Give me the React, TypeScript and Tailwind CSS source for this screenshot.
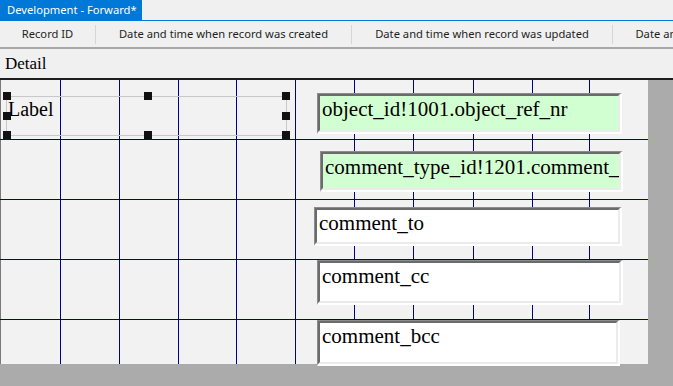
import React from "react";

// Access-style form design view: "Development - Forward*"

const headerCols = [
  { label: "Record ID", w: "w-[96px]" },
  { label: "Date and time when record was created", w: "w-[256px]" },
  { label: "Date and time when record was updated", w: "w-[261px]" },
  { label: "Date and time when record was deleted", w: "w-[254px]" },
];

const vLines = [60, 119, 178, 236, 295, 354, 413, 473, 532, 589];
const hLines = [59, 119, 179, 239];

const fields = [
  { text: "object_id!1001.object_ref_nr", box: "left-[316px] top-[13px] w-[305px] h-[41px]", bg: "bg-[#d2ffd2]" },
  { text: "comment_type_id!1201.comment_type", box: "left-[319px] top-[71px] w-[303px] h-[41px]", bg: "bg-[#d2ffd2]" },
  { text: "comment_to", box: "left-[313px] top-[127px] w-[308px] h-[39px]", bg: "bg-white" },
  { text: "comment_cc", box: "left-[316px] top-[180px] w-[306px] h-[45px]", bg: "bg-white" },
  { text: "comment_bcc", box: "left-[316px] top-[240px] w-[303px] h-[46px]", bg: "bg-white" },
];

const handles = [
  "left-[2px] top-[12px]",
  "left-[143px] top-[12px]",
  "left-[281px] top-[12px]",
  "left-[2px] top-[32px]",
  "left-[281px] top-[32px]",
  "left-[2px] top-[51px]",
  "left-[143px] top-[51px]",
  "left-[281px] top-[51px]",
];

function TextBox({ text, box, bg }: (typeof fields)[0]) {
  return (
    <div
      className={`absolute ${box} border-t border-l border-t-[#8c8c8c] border-l-[#8c8c8c] border-r-2 border-b-2 border-r-white border-b-white`}
    >
      <div
        className={`h-full w-full overflow-hidden whitespace-nowrap border-t-2 border-l-2 border-t-[#6b6b6b] border-l-[#6b6b6b] border-r-2 border-b-2 border-r-[#ebebeb] border-b-[#ebebeb] ${bg} pl-[2px] pt-[1px] text-[21px] leading-[24px] text-black`}
        style={{ fontFamily: '"Liberation Serif", "Times New Roman", serif' }}
      >
        {text}
      </div>
    </div>
  );
}

export default function App() {
  return (
    <div
      className="relative h-[386px] w-[673px] overflow-hidden bg-[#ababab]"
      style={{ fontFamily: '"Noto Sans", "Open Sans", sans-serif' }}
    >
      {/* Tab strip */}
      <div className="flex h-[21px] border-b border-[#0078d7] bg-[#f0f0f0]">
        <div className="flex h-[20px] w-[142px] items-center whitespace-nowrap pl-[7px] text-[11.2px] text-white bg-[#0078d7]">
          Development - Forward*
        </div>
      </div>

      {/* Datasheet-like header */}
      <div className="flex h-[28px] items-center overflow-hidden whitespace-nowrap border-b-2 border-[#a8a8a8] bg-[#f0f0f0] text-[11.2px] text-[#1e1e1e]">
        {headerCols.map((c, i) => (
          <div
            key={c.label}
            className={`${c.w} flex h-[19px] shrink-0 items-center justify-center ${i < 3 ? "border-r border-[#d6d6d6]" : ""}`}
          >
            {c.label}
          </div>
        ))}
      </div>

      {/* Section bar */}
      <div
        className="flex h-[31px] items-center border-b-2 border-[#1e1e1e] bg-[#f0f0f0] pl-[5px] text-[17px] text-black"
        style={{ fontFamily: '"Liberation Serif", "Times New Roman", serif' }}
      >
        Detail
      </div>

      {/* Design surface */}
      <div className="relative h-[284px] w-[648px] border-l border-[#7a7a7a] bg-[#f2f2f2]">
        <svg className="absolute left-[-1px] top-0" width="648" height="284">
          {vLines.map((x) => (
            <line key={x} x1={x + 0.5} y1={0} x2={x + 0.5} y2={284} stroke="#00008c" strokeWidth={1} />
          ))}
          {hLines.map((y) => (
            <line key={y} x1={0} y1={y + 0.5} x2={648} y2={y + 0.5} stroke="#00008c" strokeWidth={1} />
          ))}
        </svg>

        {/* Selected label */}
        <div className="absolute left-[5px] top-[16px] h-[40px] w-[281px] border border-[#c8c8c8]" />
        <div
          className="absolute left-[7px] top-[18px] text-[20px] leading-[23px] text-black"
          style={{ fontFamily: '"Liberation Serif", "Times New Roman", serif' }}
        >
          Label
        </div>
        {handles.map((h) => (
          <div key={h} className={`absolute ${h} h-[8px] w-[8px] bg-[#111111]`} />
        ))}

        {fields.map((f) => (
          <TextBox key={f.text} {...f} />
        ))}
      </div>
    </div>
  );
}
